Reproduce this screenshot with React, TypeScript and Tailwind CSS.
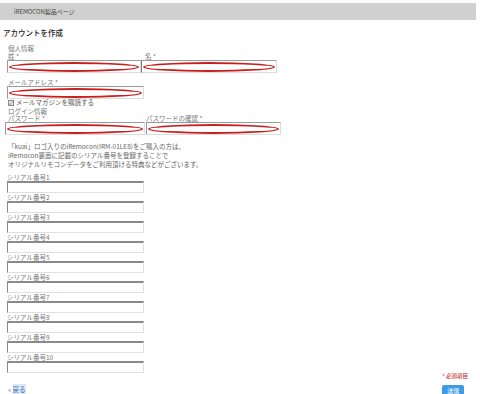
import React from "react";

const Box = ({ className = "", ellipse = false }: { className?: string; ellipse?: boolean }) => (
  <div
    className={`relative h-[13px] border-t border-l border-r border-b border-t-[#9a9a9a] border-l-[#9a9a9a] border-r-[#dcdcdc] border-b-[#dcdcdc] bg-white ${className}`}
  >
    {ellipse && (
      <span className="absolute left-[1px] right-[1px] top-[1px] bottom-[0px] rounded-[50%] border-2 border-[#c81e1e]" />
    )}
  </div>
);

const Serial = ({ n }: { n: number }) => (
  <div className="h-[20px]">
    <div className="h-[7px] leading-[7px] text-[6.5px] text-[#777]">シリアル番号{n}</div>
    <div className="h-[12px] w-[137px] border-t-2 border-l border-r border-b border-t-[#8a8a8a] border-l-[#8a8a8a] border-r-[#e0e0e0] border-b-[#e0e0e0] bg-white" />
  </div>
);

export default function App() {
  return (
    <div className="w-[480px] h-[394px] overflow-hidden bg-white text-[#666] font-['Noto_Sans_CJK_JP',sans-serif]">
      <div className="pt-[3px]">
        <div className="h-[17px] w-[476px] bg-[#d0d0d0] pl-[14px] flex items-center text-[6px] text-[#444]">
          iREMOCON製品ページ
        </div>
      </div>

      <h1 className="mt-[7px] pl-[3px] h-[12px] leading-[12px] text-[7.5px] font-medium text-[#222]">
        アカウントを作成
      </h1>

      <div className="pl-[7px]">
        <div className="mt-[6px] pl-[1px] h-[7px] leading-[7px] text-[6.5px] text-[#777]">個人情報</div>
        <div className="mt-[1px] flex h-[7px] leading-[7px] text-[6.5px] text-[#777]">
          <div className="w-[138px] pl-[1px]">姓 *</div>
          <div>名 *</div>
        </div>
        <div className="flex">
          <Box className="w-[134px]" ellipse />
          <Box className="w-[136px] border-l-[#777]" ellipse />
        </div>

        <div className="mt-[6px] pl-[1px] h-[7px] leading-[7px] text-[6.5px] text-[#777]">メールアドレス *</div>
        <Box className="w-[137px] h-[12px]" ellipse />

        <div className="h-[7px] flex items-center gap-[2px] pl-[1px] text-[6.5px] text-[#555]">
          <span className="w-[6px] h-[6px] border border-[#888] bg-[#eee] flex items-center justify-center text-[5px] leading-none text-[#444]">
            ✓
          </span>
          メールマガジンを購読する
        </div>

        <div className="mt-[2px] pl-[1px] h-[7px] leading-[7px] text-[6.5px] text-[#777]">ログイン情報</div>
        <div className="flex h-[7px] leading-[7px] text-[6.5px] text-[#777]">
          <div className="w-[139px] pl-[1px]">パスワード *</div>
          <div>パスワードの確認 *</div>
        </div>
        <div className="flex -ml-[2px]">
          <Box className="w-[140px]" ellipse />
          <Box className="ml-[1px] w-[135px]" ellipse />
        </div>

        <p className="mt-[7px] pl-[1px] text-[6.5px] leading-[9px] text-[#666]">
          「kuai」ロゴ入りのiRemocon(IRM-01LE8)をご購入の方は、
          <br />
          iRemocon裏面に記載のシリアル番号を登録することで
          <br />
          オリジナルリモコンデータをご利用頂ける特典などがございます。
        </p>

        <div className="mt-[5px]">
          {[1, 2, 3, 4, 5, 6, 7, 8, 9, 10].map((n) => (
            <Serial key={n} n={n} />
          ))}
        </div>
      </div>

      <div className="flex justify-between items-start pl-[8px] pr-[12px]">
        <a className="mt-[12px] text-[6.5px] leading-[7px] text-[#3a6fc0]">
          « <span className="bg-[#dde8f6]">戻る</span>
        </a>
        <div className="flex flex-col items-start">
          <span className="-mt-[1px] text-[5.5px] leading-[7px] text-[#c00000]">* 必須項目</span>
          <button className="mt-[5px] w-[22px] h-[12px] rounded-[2px] bg-[#3d9be3] text-white text-[6px] leading-[9px] flex items-start justify-center pt-[1px]">
            送信
          </button>
        </div>
      </div>
    </div>
  );
}
